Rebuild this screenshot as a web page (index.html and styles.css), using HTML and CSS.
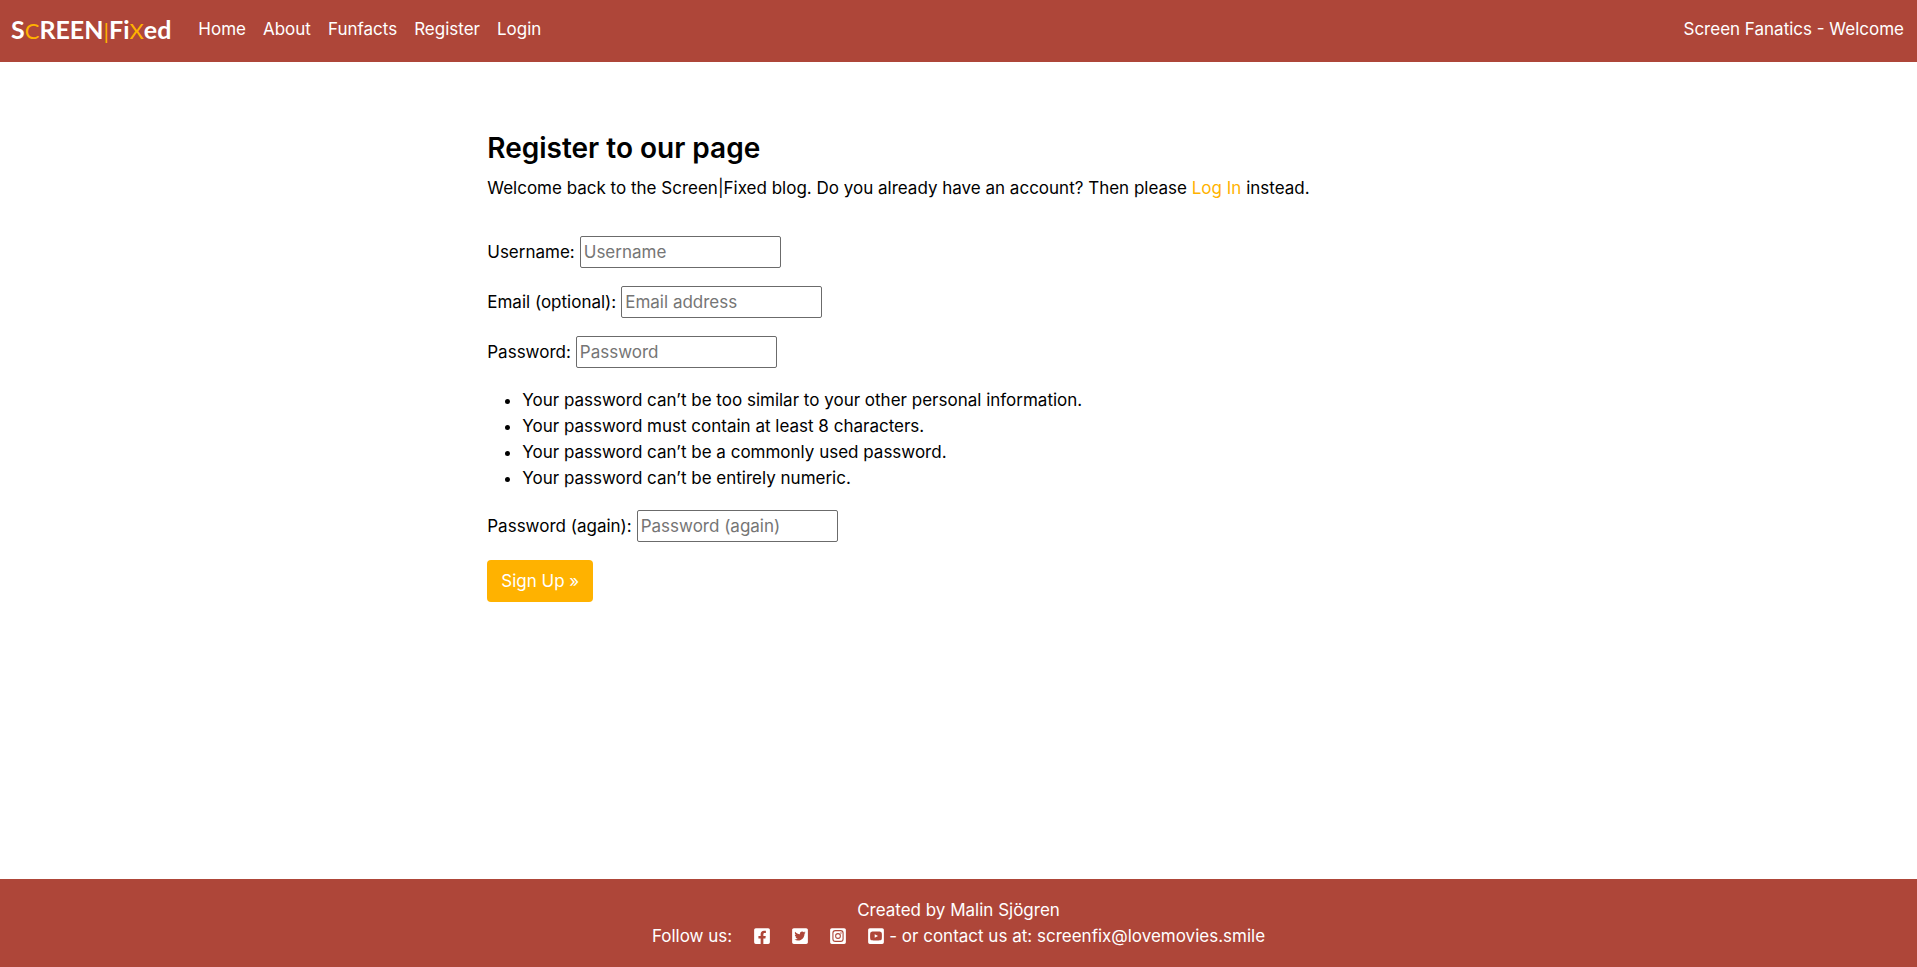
FILE: index.html
```html
<!DOCTYPE html>
<html lang="en">
<head>
<meta charset="utf-8">
<meta name="viewport" content="width=device-width, initial-scale=1">
<title>Screen|Fixed - Register</title>
<link rel="stylesheet" href="styles.css">
</head>
<body>
<header class="navbar">
  <a class="brand" href="#">S<span class="accent">C</span>REEN<span class="accent">|</span>Fi<span class="accent">X</span>ed</a>
  <nav class="menu">
    <a href="#">Home</a>
    <a href="#">About</a>
    <a href="#">Funfacts</a>
    <a href="#">Register</a>
    <a href="#">Login</a>
  </nav>
  <span class="tagline">Screen Fanatics - Welcome</span>
</header>

<main class="content">
  <h1>Register to our page</h1>
  <p class="intro">Welcome back to the Screen|Fixed blog. Do you already have an account? Then please <a href="#">Log In</a> instead.</p>
  <form class="signup">
    <div class="field"><label for="username">Username:</label><input id="username" type="text" placeholder="Username"></div>
    <div class="field"><label for="email">Email (optional):</label><input id="email" type="email" placeholder="Email address"></div>
    <div class="field"><label for="password1">Password:</label><input id="password1" type="password" placeholder="Password"></div>
    <ul class="rules">
      <li>Your password can’t be too similar to your other personal information.</li>
      <li>Your password must contain at least 8 characters.</li>
      <li>Your password can’t be a commonly used password.</li>
      <li>Your password can’t be entirely numeric.</li>
    </ul>
    <div class="field"><label for="password2">Password (again):</label><input id="password2" type="password" placeholder="Password (again)"></div>
    <button class="submit" type="submit">Sign Up »</button>
  </form>
</main>

<footer class="footer">
  <div>Created by Malin Sjögren</div>
  <div class="contact">
    <span>Follow us:</span>
    <div class="social">
      <a href="#" aria-label="Facebook"><svg viewBox="0 0 448 512"><path d="M400 32H48A48 48 0 0 0 0 80v352a48 48 0 0 0 48 48h137.250V327.690h-63V256h63v-54.640c0-62.150 37-96.480 93.670-96.480 27.140 0 55.520 4.840 55.520 4.840v61h-31.270c-30.810 0-40.420 19.120-40.420 38.730V256h68.780l-11 71.690h-57.780V480H400a48 48 0 0 0 48-48V80a48 48 0 0 0-48-48z"/></svg></a>
      <a href="#" aria-label="Twitter"><svg viewBox="0 0 448 512"><path d="M400 32H48C21.500 32 0 53.500 0 80v352c0 26.500 21.500 48 48 48h352c26.500 0 48-21.500 48-48V80c0-26.500-21.500-48-48-48zm-48.900 158.800c.2 2.800.2 5.700.2 8.500 0 86.700-66 186.600-186.600 186.600-37.200 0-71.700-10.800-100.700-29.400 5.300.6 10.400.8 15.800.8 30.700 0 58.900-10.400 81.400-28-28.800-.6-53-19.500-61.300-45.500 10.100 1.500 19.200 1.500 29.600-1.200-30-6.100-52.500-32.500-52.500-64.400v-.8c8.700 4.900 18.900 7.900 29.600 8.300a65.447 65.447 0 0 1-29.200-54.600c0-12.200 3.200-23.400 8.900-33.100 32.300 39.800 80.800 65.800 135.200 68.600-9.300-44.500 24-80.600 64-80.600 18.900 0 35.900 7.900 47.900 20.700 14.800-2.800 29-8.300 41.600-15.800-4.900 15.200-15.200 28-28.800 36.100 13.200-1.400 26-5.100 37.800-10.200-8.900 13.100-20.100 24.700-32.900 34z"/></svg></a>
      <a href="#" aria-label="Instagram"><svg viewBox="0 0 448 512"><path fill-rule="evenodd" d="M48 32h352a48 48 0 0 1 48 48v352a48 48 0 0 1-48 48H48a48 48 0 0 1-48-48V80a48 48 0 0 1 48-48zM150 88a86 86 0 0 0-86 86v164a86 86 0 0 0 86 86h148a86 86 0 0 0 86-86V174a86 86 0 0 0-86-86zM150 119h148a55 55 0 0 1 55 55v164a55 55 0 0 1-55 55H150a55 55 0 0 1-55-55V174a55 55 0 0 1 55-55zM224 174a82 82 0 1 0 0 164a82 82 0 1 0 0-164zM224 203a53 53 0 1 1 0 106a53 53 0 1 1 0-106zM309 151a19 19 0 1 0 0 38a19 19 0 1 0 0-38z"/></svg></a>
      <a href="#" aria-label="YouTube"><svg viewBox="0 0 448 512"><path fill-rule="evenodd" d="M48 32h352a48 48 0 0 1 48 48v352a48 48 0 0 1-48 48H48a48 48 0 0 1-48-48V80a48 48 0 0 1 48-48zM224 128c-50 0-100 1-125 5-20 4-34 18-38 38-7 50-7 120 0 170 4 20 18 34 38 38 50 7 200 7 250 0 20-4 34-18 38-38 7-50 7-120 0-170-4-20-18-34-38-38-25-4-75-5-125-5zM187 205l95 51-95 51z"/></svg></a>
    </div>
    <span>- or contact us at: screenfix@lovemovies.smile</span>
  </div>
</footer>
</body>
</html>
```
FILE: styles.css
```css
* { box-sizing: border-box; }

body {
  display: flex;
  flex-direction: column;
  min-height: 100vh;
  margin: 0;
  background: #fff;
  color: #000;
  font-family: Inter, "Liberation Sans", sans-serif;
  font-size: 17px;
  line-height: 26px;
}

a { color: inherit; text-decoration: none; }

.navbar {
  display: flex;
  align-items: center;
  padding: 11px 13px 15px 11px;
  background: #ae4639;
  color: #fff;
}

.brand {
  margin-right: 27px;
  font-family: Lato, sans-serif;
  font-size: 25px;
  font-weight: 700;
  line-height: 36px;
}

.accent {
  color: #ffb200;
  font-size: 22px;
  font-weight: 400;
  line-height: 26px;
}

.menu { display: flex; gap: 17px; }

.tagline { margin-left: auto; }

.content {
  width: 50%;
  margin: 0 auto;
  padding: 67px 8px;
}

h1 {
  margin: 0 0 8px;
  font-size: 28px;
  font-weight: 600;
  line-height: 38px;
}

.intro { margin: 0 0 35px; }
.intro a { color: #ffb200; }

.field {
  display: flex;
  align-items: center;
  gap: 5px;
  margin-bottom: 18px;
}

.field input {
  width: 201px;
  height: 32px;
  padding: 1px 3px;
  border: 1px solid #6b6b6b;
  border-radius: 2px;
  background: #fff;
  color: #000;
  font: inherit;
}

.field input::placeholder { color: #757575; opacity: 1; }

.rules { margin: 19px 0; padding-left: 35px; }

.submit {
  padding: 8px 14px;
  border: 0;
  border-radius: 4px;
  background: #ffb200;
  color: #fff;
  font: inherit;
}

.footer {
  margin-top: auto;
  padding: 18px 16px;
  background: #ae4639;
  color: #fff;
  text-align: center;
}

.contact {
  display: flex;
  align-items: center;
  justify-content: center;
  gap: 5px;
}

.social { display: flex; gap: 22px; margin-left: 17px; }
.social a { display: flex; }
.social svg { width: 16px; height: 18px; fill: #fff; }
```
